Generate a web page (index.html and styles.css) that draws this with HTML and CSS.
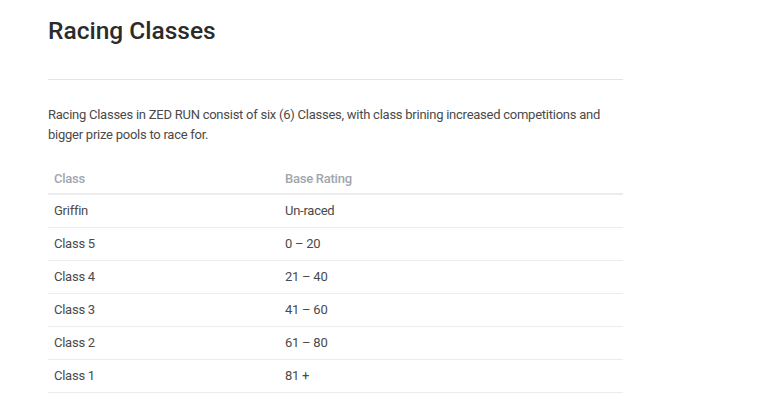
FILE: index.html
```html
<!DOCTYPE html>
<html>
<head>
<meta charset="utf-8">
<link rel="stylesheet" href="styles.css">
</head>
<body>
<main class="page">
  <h1 class="title">Racing Classes</h1>
  <hr class="rule">
  <p class="intro">Racing Classes in ZED RUN consist of six (6) Classes, with class brining increased competitions and bigger prize pools to race for.</p>
  <table class="classes">
    <thead>
      <tr><th class="col-class">Class</th><th>Base Rating</th></tr>
    </thead>
    <tbody>
      <tr><td>Griffin</td><td>Un-raced</td></tr>
      <tr><td>Class 5</td><td>0 – 20</td></tr>
      <tr><td>Class 4</td><td>21 – 40</td></tr>
      <tr><td>Class 3</td><td>41 – 60</td></tr>
      <tr><td>Class 2</td><td>61 – 80</td></tr>
      <tr><td>Class 1</td><td>81 +</td></tr>
    </tbody>
  </table>
</main>
</body>
</html>
```
FILE: styles.css
```css
html, body {
  margin: 0;
  padding: 0;
  background: #ffffff;
}
body {
  font-family: Roboto, "Liberation Sans", sans-serif;
  color: #444;
}
.page {
  width: 575px;
  margin-left: 48px;
  padding-top: 15px;
}
.title {
  margin: 0;
  font-size: 24.5px;
  font-weight: 500;
  line-height: 32px;
  color: #2b2b2b;
}
.rule {
  border: 0;
  border-top: 1px solid #e4e4e4;
  margin: 32px 0 0;
}
.intro {
  margin: 25px 0 0;
  font-size: 13px;
  line-height: 20px;
  letter-spacing: -0.25px;
  color: #4a4a4a;
}
.classes {
  width: 100%;
  table-layout: fixed;
  border-collapse: collapse;
  margin-top: 17px;
  font-size: 13px;
  letter-spacing: -0.25px;
}
.classes th {
  text-align: left;
  font-weight: 500;
  color: #a0a6ae;
  padding: 9px 6px 7px;
  border-bottom: 2px solid #ececec;
}
.col-class {
  width: 219px;
}
.classes td {
  padding: 8px 6px;
  height: 16px;
  line-height: 16px;
  color: #4a4a4a;
  border-bottom: 1px solid #ececec;
}
```
